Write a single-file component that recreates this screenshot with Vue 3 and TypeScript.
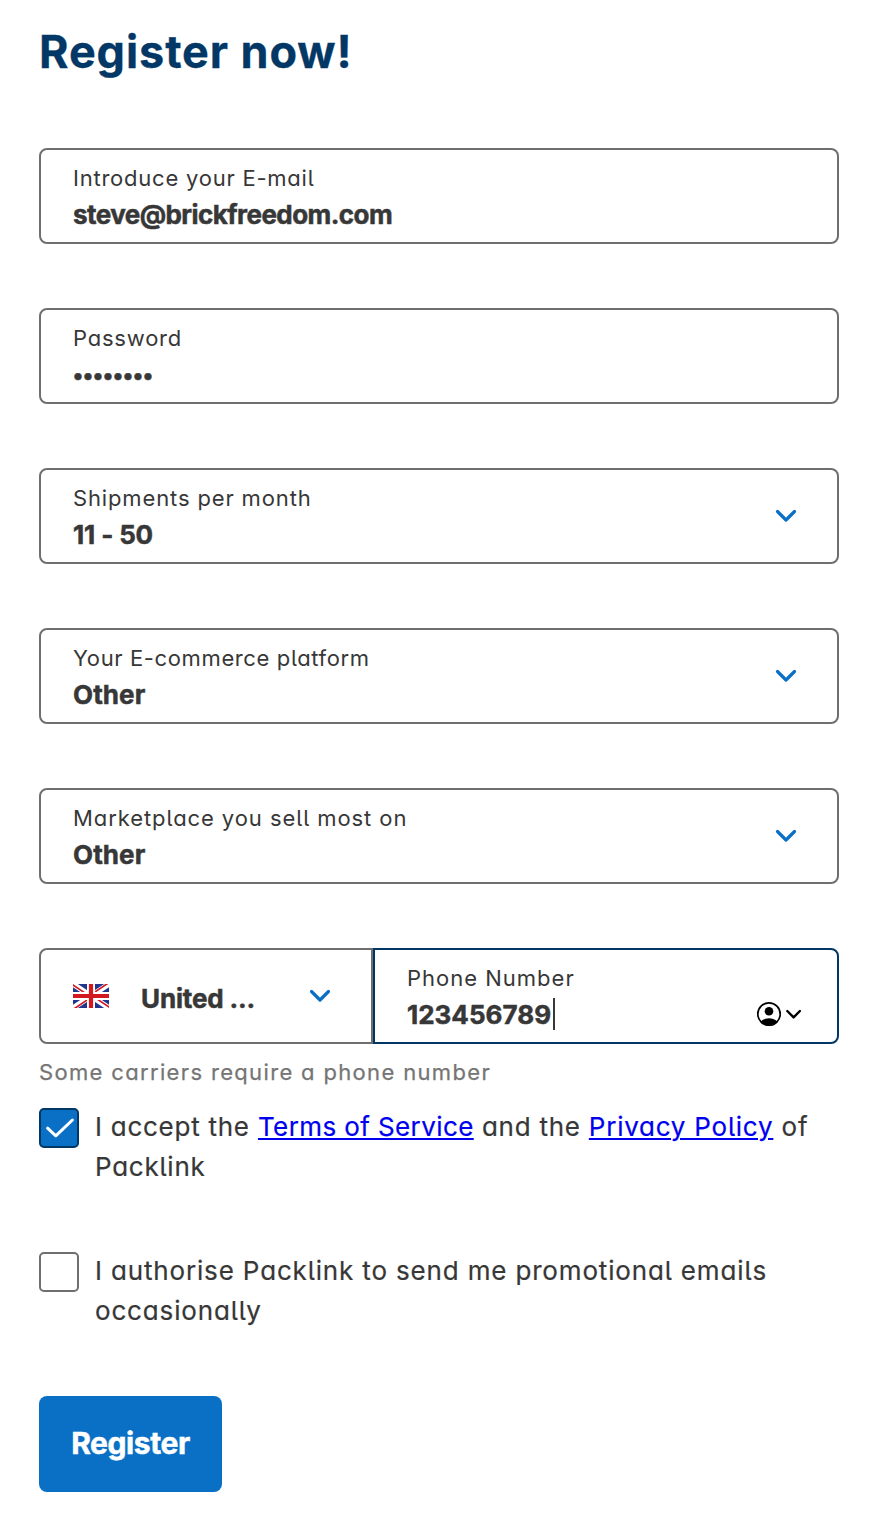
<script setup lang="ts">
import { ref } from 'vue'

interface Field {
  id: string
  label: string
  value: string
  kind: 'text' | 'password' | 'select'
}

const fields: Field[] = [
  { id: 'email', label: 'Introduce your E-mail', value: 'steve@brickfreedom.com', kind: 'text' },
  { id: 'password', label: 'Password', value: '••••••••', kind: 'password' },
  { id: 'shipments', label: 'Shipments per month', value: '11 - 50', kind: 'select' },
  { id: 'platform', label: 'Your E-commerce platform', value: 'Other', kind: 'select' },
  { id: 'marketplace', label: 'Marketplace you sell most on', value: 'Other', kind: 'select' },
]

const terms = ref(true)
const promo = ref(false)
</script>

<template>
  <main class="page">
    <h1 class="title">Register now!</h1>

    <div v-for="f in fields" :key="f.id" class="field" :class="f.id">
      <div class="body">
        <div class="label">{{ f.label }}</div>
        <div v-if="f.kind === 'password'" class="value dots">
          <span v-for="(dot, i) in f.value" :key="i" class="dot">{{ dot }}</span>
        </div>
        <div v-else class="value">{{ f.value }}</div>
      </div>
      <svg v-if="f.kind === 'select'" class="chevron" viewBox="0 0 24 16">
        <path d="M3.5 3.5 12 12l8.500-8.500" />
      </svg>
    </div>

    <div class="phone-row">
      <div class="country">
        <svg class="flag" viewBox="0 0 36 24">
          <rect width="36" height="24" fill="#20368f" />
          <path d="M0 0 36 24M36 0 0 24" stroke="#fff" stroke-width="5.400" />
          <path d="M-1 .400 17 12.400M37 23.600 19 11.600M35 -.800 18 10.600M1 24.800 18 13.400" stroke="#d3181f" stroke-width="1.700" />
          <path d="M18 0v24M0 12h36" stroke="#fff" stroke-width="8" />
          <path d="M18 0v24M0 12h36" stroke="#d3181f" stroke-width="4.200" />
        </svg>
        <span class="country-name">United ...</span>
        <svg class="chevron" viewBox="0 0 24 16">
          <path d="M3.500 3.500 12 12l8.500-8.500" />
        </svg>
      </div>
      <div class="field phone">
        <div class="body">
          <div class="label">Phone Number</div>
          <div class="value number">123456789<i class="caret"></i></div>
        </div>
        <svg class="contact" viewBox="0 0 46 26">
          <defs>
            <clipPath id="avatar-clip"><circle cx="13" cy="13" r="12" /></clipPath>
          </defs>
          <circle cx="13" cy="13" r="11.200" fill="#fff" stroke="#000" stroke-width="1.700" />
          <circle cx="13" cy="10.300" r="4.300" />
          <ellipse cx="13" cy="23.300" rx="9.200" ry="6" clip-path="url(#avatar-clip)" />
          <path d="m31.300 10 6.300 6.400 6.300-6.400" fill="none" stroke="#000" stroke-width="2.400" stroke-linecap="round" stroke-linejoin="round" />
        </svg>
      </div>
    </div>
    <p class="hint">Some carriers require a phone number</p>

    <div class="consent" @click="terms = !terms">
      <span class="check" :class="{ on: terms }">
        <svg v-if="terms" class="tick" viewBox="0 0 40 40"><path d="m8.600 20.200 8.200 7.600L33.400 12" /></svg>
      </span>
      <div class="consent-text">
        <div class="line">
          <span>I accept the</span>
          <a class="link terms">Terms of Service</a>
          <span>and the</span>
          <a class="link privacy">Privacy Policy</a>
          <span>of</span>
        </div>
        <div class="line">Packlink</div>
      </div>
    </div>

    <div class="consent second" @click="promo = !promo">
      <span class="check" :class="{ on: promo }">
        <svg v-if="promo" class="tick" viewBox="0 0 40 40"><path d="m8.600 20.200 8.200 7.600L33.400 12" /></svg>
      </span>
      <div class="consent-text">I authorise Packlink to send me promotional emails occasionally</div>
    </div>

    <button class="submit" type="button">Register</button>
  </main>
</template>

<style>
body {
  background: #fff;
}
</style>

<style scoped>
.page {
  box-sizing: border-box;
  width: 884px;
  height: 1538px;
  padding: 20px 45px 0 39px;
  color: #373737;
  font-family: Inter, "Liberation Sans", sans-serif;
  font-feature-settings: "cv11" 1, "cv05" 1;
}
.title {
  margin: 0 0 64px;
  color: #033866;
  font-size: 45px;
  line-height: 64px;
  font-weight: 700;
  letter-spacing: 0.9px;
  -webkit-text-stroke: 0.3px currentColor;
}
.field {
  box-sizing: border-box;
  display: flex;
  align-items: center;
  justify-content: space-between;
  width: 800px;
  height: 96px;
  margin-bottom: 64px;
  padding: 0 40px 0 32px;
  border: 2px solid #6f6f6f;
  border-radius: 8px;
}
.body {
  height: 72px;
}
.label {
  font-size: 22px;
  line-height: 36px;
  letter-spacing: 0.92px;
  white-space: nowrap;
}
.email .label { letter-spacing: 0.77px; }
.password .label { letter-spacing: 0.78px; }
.platform .label { letter-spacing: 0.62px; }
.shipments .label { letter-spacing: 0.86px; }
.phone .label { letter-spacing: 1px; }
.value {
  font-size: 26px;
  line-height: 37px;
  font-weight: 700;
  letter-spacing: 0.1px;
  white-space: nowrap;
  -webkit-text-stroke: 0.5px currentColor;
}
.email .value { letter-spacing: -0.56px; }
.shipments .value { letter-spacing: -0.15px; }
.value.number { letter-spacing: 0; }
.dots {
  display: flex;
  padding-top: 1px;
}
.dot {
  width: 10px;
  display: flex;
  justify-content: center;
  font-size: 22px;
  letter-spacing: 0;
}
.chevron {
  width: 24px;
  height: 16px;
  flex: none;
  fill: none;
  stroke: #0a6fc6;
  stroke-width: 3.2;
  stroke-linecap: round;
  stroke-linejoin: round;
}
.field .chevron {
  margin-right: -1px;
}
.phone-row {
  display: flex;
  height: 96px;
}
.country {
  box-sizing: border-box;
  display: flex;
  align-items: center;
  width: 334px;
  padding-left: 32px;
  border: 2px solid #6f6f6f;
  border-radius: 8px 0 0 8px;
}
.flag {
  width: 36px;
  height: 24px;
}
.country-name {
  width: 166px;
  margin-left: 32px;
  padding-top: 5px;
  font-size: 26px;
  line-height: 36px;
  font-weight: 700;
  letter-spacing: -0.15px;
  -webkit-text-stroke: 0.5px currentColor;
}
.country .chevron {
  margin-left: 1px;
}
.field.phone {
  width: 466px;
  margin: 0;
  padding-right: 35px;
  border-color: #003764;
  border-radius: 0 8px 8px 0;
}
.number {
  display: flex;
  align-items: center;
}
.caret {
  width: 2px;
  height: 32px;
  margin: -2px 0 0 2px;
  background: #373737;
}
.contact {
  width: 46px;
  height: 26px;
  margin-top: 36px;
}
.hint {
  margin: 10px 0 0;
  color: #757575;
  font-size: 22px;
  line-height: 36px;
  letter-spacing: 1.34px;
  -webkit-text-stroke: 0.25px currentColor;
}
.consent {
  display: flex;
  gap: 16px;
  height: 80px;
  margin-top: 17px;
}
.second {
  margin-top: 64px;
}
.check {
  box-sizing: border-box;
  width: 40px;
  height: 40px;
  flex: none;
  margin-top: 1px;
  border: 2px solid #6f6f6f;
  border-radius: 5px;
}
.check.on {
  border-color: #003764;
  background: #0a70c5;
}
.tick {
  display: block;
  width: 40px;
  height: 40px;
  margin: -2px;
  fill: none;
  stroke: #fff;
  stroke-width: 3;
  stroke-linecap: round;
  stroke-linejoin: round;
}
.consent-text {
  width: 730px;
  font-size: 26px;
  line-height: 40px;
  letter-spacing: 0.84px;
  -webkit-text-stroke: 0.2px currentColor;
}
.line {
  display: flex;
  gap: 8.2px;
  white-space: nowrap;
  letter-spacing: 0.74px;
}
.link {
  color: #0000ee;
  text-decoration: underline;
  text-decoration-thickness: 2px;
  text-underline-offset: 2px;
  cursor: pointer;
}
.terms { letter-spacing: 0.4px; }
.privacy { letter-spacing: 0.76px; }
.submit {
  display: block;
  width: 183px;
  height: 96px;
  margin-top: 65px;
  padding: 0 0 2px;
  border: 0;
  border-radius: 8px;
  background: #0a70c5;
  color: #fff;
  font: inherit;
  font-size: 30px;
  font-weight: 700;
  letter-spacing: -0.4px;
  -webkit-text-stroke: 0.5px currentColor;
}
</style>
